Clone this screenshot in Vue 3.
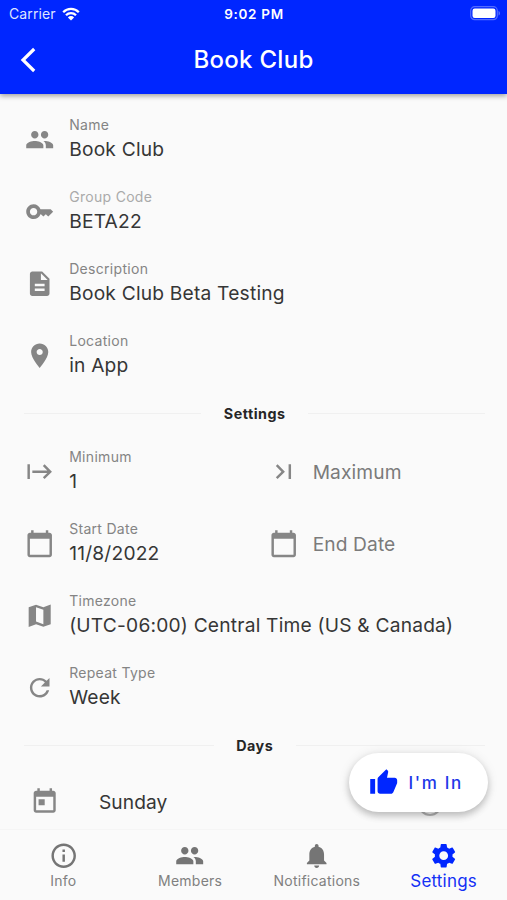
<script setup>
const icons = {
  people: 'M16 11c1.66 0 2.99-1.34 2.99-3S17.66 5 16 5s-3 1.34-3 3 1.34 3 3 3zm-8 0c1.66 0 2.99-1.34 2.99-3S9.66 5 8 5 5 6.34 5 8s1.34 3 3 3zm0 2c-2.33 0-7 1.17-7 3.5V19h14v-2.5c0-2.33-4.67-3.5-7-3.5zm8 0c-.29 0-.62.02-.97.05 1.16.84 1.97 1.97 1.97 3.45V19h6v-2.5c0-2.33-4.67-3.5-7-3.5z',
  key: 'M21 10h-8.35C11.83 7.67 9.61 6 7 6c-3.31 0-6 2.69-6 6s2.69 6 6 6c2.61 0 4.83-1.67 5.65-4H13l2 2 2-2 2 2 4-4.04L21 10zM7 15c-1.65 0-3-1.35-3-3s1.35-3 3-3 3 1.35 3 3-1.35 3-3 3z',
  doc: 'M14 2H6c-1.1 0-1.99.9-1.99 2L4 20c0 1.1.89 2 1.99 2H18c1.1 0 2-.9 2-2V8l-6-6zm2 16H8v-2h8v2zm0-4H8v-2h8v2zm-3-5V3.5L18.5 9H13z',
  place: 'M12 2C8.13 2 5 5.13 5 9c0 5.25 7 13 7 13s7-7.75 7-13c0-3.87-3.13-7-7-7zm0 9.5c-1.38 0-2.5-1.12-2.5-2.5s1.12-2.5 2.5-2.5 2.5 1.12 2.5 2.5-1.12 2.5-2.5 2.5z',
  start: 'M14.59 7.41L18.17 11H6v2h12.17l-3.59 3.59L16 18l6-6-6-6-1.41 1.41zM2 6v12h2V6H2z',
  last: 'M5.59 7.41L10.18 12l-4.59 4.59L7 18l6-6-6-6zM16 6h2v12h-2z',
  calendar: 'M20 3h-1V1h-2v2H7V1H5v2H4c-1.1 0-2 .9-2 2v16c0 1.1.9 2 2 2h16c1.1 0 2-.9 2-2V5c0-1.1-.9-2-2-2zm0 18H4V8h16v13z',
  map: 'M15 5.1L9 3 3 5.02v16.2l6-2.33 6 2.1 6-2.02V2.77L15 5.1zm0 13.79l-6-2.11V5.11l6 2.11v11.67z',
  refresh: 'M17.65 6.35C16.2 4.9 14.21 4 12 4c-4.42 0-7.99 3.58-7.99 8s3.57 8 7.99 8c3.73 0 6.84-2.55 7.73-6h-2.08c-.82 2.33-3.04 4-5.65 4-3.31 0-6-2.69-6-6s2.69-6 6-6c1.66 0 3.14.69 4.22 1.78L13 11h7V4l-2.35 2.35z',
  today: 'M19 3h-1V1h-2v2H8V1H6v2H5c-1.11 0-1.99.9-1.99 2L3 19c0 1.1.89 2 2 2h14c1.1 0 2-.9 2-2V5c0-1.1-.9-2-2-2zm0 16H5V8h14v11zM7 10h5v5H7v-5z',
  info: 'M11 7h2v2h-2zm0 4h2v6h-2zm1-9C6.48 2 2 6.48 2 12s4.48 10 10 10 10-4.48 10-10S17.52 2 12 2zm0 18c-4.41 0-8-3.59-8-8s3.59-8 8-8 8 3.59 8 8-3.59 8-8 8z',
  bell: 'M12 22c1.1 0 2-.9 2-2h-4c0 1.1.89 2 2 2zm6-6v-5c0-3.07-1.64-5.64-4.5-6.32V4c0-.83-.67-1.5-1.5-1.5s-1.5.67-1.5 1.5v.68C7.63 5.36 6 7.92 6 11v5l-2 2v1h16v-1l-2-2z',
  gear: 'M19.14 12.94c.04-.3.06-.61.06-.94 0-.32-.02-.64-.07-.94l2.03-1.58c.18-.14.23-.41.12-.61l-1.92-3.32c-.12-.22-.37-.29-.59-.22l-2.39.96c-.5-.38-1.03-.7-1.62-.94l-.36-2.54c-.04-.24-.24-.41-.48-.41h-3.84c-.24 0-.43.17-.47.41l-.36 2.54c-.59.24-1.13.57-1.62.94l-2.39-.96c-.22-.08-.47 0-.59.22L2.74 8.87c-.12.21-.08.47.12.61l2.03 1.58c-.05.3-.09.63-.09.94s.02.64.07.94l-2.03 1.58c-.18.14-.23.41-.12.61l1.92 3.32c.12.22.37.29.59.22l2.39-.96c.5.38 1.03.7 1.62.94l.36 2.54c.05.24.24.41.48.41h3.84c.24 0 .44-.17.47-.41l.36-2.54c.59-.24 1.13-.56 1.62-.94l2.39.96c.22.08.47 0 .59-.22l1.92-3.32c.12-.22.07-.47-.12-.61l-2.01-1.58zM12 15.6c-1.98 0-3.6-1.62-3.6-3.6s1.62-3.6 3.6-3.6 3.6 1.62 3.6 3.6-1.62 3.6-3.6 3.6z',
  thumb: 'M1 21h4V9H1v12zm22-11c0-1.1-.9-2-2-2h-6.31l.95-4.57.03-.32c0-.41-.17-.79-.44-1.06L14.17 1 7.59 7.59C7.22 7.95 7 8.45 7 9v10c0 1.1.9 2 2 2h9c.83 0 1.54-.5 1.84-1.22l3.02-7.05c.09-.23.14-.47.14-.73v-2z',
}

const details = [
  [{ icon: 'people', label: 'Name', value: 'Book Club' }],
  [{ icon: 'key', label: 'Group Code', value: 'BETA22', disabled: true }],
  [{ icon: 'doc', label: 'Description', value: 'Book Club Beta Testing' }],
  [{ icon: 'place', label: 'Location', value: 'in App' }],
]
const settings = [
  [{ icon: 'start', label: 'Minimum', value: '1' }, { icon: 'last', placeholder: 'Maximum' }],
  [{ icon: 'calendar', label: 'Start Date', value: '11/8/2022' }, { icon: 'calendar', placeholder: 'End Date' }],
  [{ icon: 'map', label: 'Timezone', value: '(UTC-06:00) Central Time (US & Canada)' }],
  [{ icon: 'refresh', label: 'Repeat Type', value: 'Week' }],
]
const sections = [
  { rows: details },
  { title: 'Settings', rows: settings },
  { title: 'Days', rows: [] },
]
const tabs = [
  { icon: 'info', label: 'Info' },
  { icon: 'people', label: 'Members' },
  { icon: 'bell', label: 'Notifications' },
  { icon: 'gear', label: 'Settings', active: true },
]
</script>

<template>
  <div class="screen">
    <header class="top">
      <div class="status">
        <div class="carrier">
          <span>Carrier</span>
          <svg class="wifi" viewBox="0 0 18 14">
            <path d="M1.2 5.2a11 11 0 0 1 15.6 0M4 8.2a7 7 0 0 1 10 0" fill="none" stroke="#fff" stroke-width="2.3" />
            <path d="M9 13.6L5.9 10.4a4.4 4.4 0 0 1 6.2 0z" fill="#fff" />
          </svg>
        </div>
        <span class="time">9:02 PM</span>
        <div class="power">
          <svg class="battery" viewBox="0 0 31 15">
            <rect x=".7" y=".7" width="26.6" height="13" rx="4" fill="none" stroke="#fff" stroke-opacity=".32" stroke-width="1.2" />
            <rect x="2.5" y="2.5" width="23" height="9.4" rx="2.2" fill="#fff" />
            <path d="M28.6 5v4.6c1.7-.7 1.7-3.9 0-4.6z" fill="#fff" fill-opacity=".4" />
          </svg>
        </div>
      </div>
      <div class="bar">
        <svg class="back" viewBox="0 0 16 26"><path d="M14.2 2L3 13l11.2 11" fill="none" stroke="#fff" stroke-width="3.2" /></svg>
        <h1>Book Club</h1>
        <span></span>
      </div>
    </header>

    <main class="content">
      <section v-for="(section, i) in sections" :key="i">
        <div v-if="section.title" class="divider"><i></i><b>{{ section.title }}</b><i></i></div>
        <div v-for="(row, r) in section.rows" :key="r" class="row" :class="{ pair: row.length > 1 }">
          <div v-for="field in row" :key="field.label || field.placeholder" class="field">
            <svg class="icon" viewBox="0 0 24 24"><path :d="icons[field.icon]" /></svg>
            <div v-if="field.label" class="text">
              <span class="label" :class="{ disabled: field.disabled }">{{ field.label }}</span>
              <span class="value">{{ field.value }}</span>
            </div>
            <span v-else class="placeholder">{{ field.placeholder }}</span>
          </div>
        </div>
      </section>
      <div class="day">
        <svg class="icon" viewBox="0 0 24 24"><path :d="icons.today" /></svg>
        <span>Sunday</span>
        <i class="check"></i>
      </div>
    </main>

    <button class="fab">
      <svg class="icon" viewBox="0 0 24 24"><path :d="icons.thumb" /></svg>
      <span>I'm In</span>
    </button>

    <nav class="tabs">
      <div v-for="tab in tabs" :key="tab.label" class="tab" :class="{ active: tab.active }">
        <svg class="icon" viewBox="0 0 24 24"><path :d="icons[tab.icon]" /></svg>
        <span>{{ tab.label }}</span>
      </div>
    </nav>
  </div>
</template>

<style>
body { margin: 0; }
</style>

<style scoped>
* { box-sizing: border-box; }
.screen {
  position: relative;
  display: flex;
  flex-direction: column;
  width: 507px;
  height: 900px;
  overflow: hidden;
  background: #fafafa;
  color: #363636;
  font-family: Inter, "Liberation Sans", sans-serif;
  white-space: nowrap;
}
.top {
  flex: none;
  z-index: 1;
  height: 94px;
  background: #0026ff;
  color: #fff;
  box-shadow: 0 2px 5px rgba(0, 0, 0, .36);
}
.status {
  display: grid;
  grid-template-columns: 1fr auto 1fr;
  align-items: center;
  height: 27px;
  padding: 0 8px 0 9px;
  font-size: 14px;
}
.carrier { display: flex; align-items: center; gap: 6px; color: #dfe4ff; letter-spacing: .1px; }
.wifi { width: 18px; height: 14px; }
.time { font-weight: 600; font-size: 13.5px; letter-spacing: .7px; }
.power { display: flex; justify-content: flex-end; }
.battery { width: 31px; height: 15px; margin-right: -2px; }
.bar {
  display: grid;
  grid-template-columns: 1fr auto 1fr;
  align-items: center;
  height: 66px;
  padding: 0 20px;
}
.back { width: 16px; height: 26px; }
h1 { margin: 0; font-size: 24px; line-height: 30px; font-weight: 500; letter-spacing: .3px; }
.content { flex: 1; min-height: 0; overflow: hidden; padding: 10px 20px 0 25.4px; }
.row { display: grid; height: 72px; }
.row.pair { grid-template-columns: 243.5px 1fr; }
.field { display: flex; align-items: center; gap: 14.4px; }
.icon { flex: none; width: 29.4px; height: 29.4px; fill: #868686; }
.text { display: flex; flex-direction: column; padding-bottom: 2px; }
.label { font-size: 14px; line-height: 20px; letter-spacing: .3px; color: #848484; }
.label.disabled { color: #aaa; }
.value { font-size: 19.2px; line-height: 28px; letter-spacing: .2px; }
.placeholder { font-size: 19.2px; letter-spacing: .1px; color: #7b7b7b; }
.divider { display: flex; align-items: center; gap: 22.5px; height: 44px; margin: 0 2px 0 -1px; padding-bottom: 1px; }
.divider i { flex: 1; height: 1px; background: #f0f0f0; }
.divider b { font-size: 14.3px; font-weight: 700; letter-spacing: .5px; color: #262626; }
.day {
  display: grid;
  grid-template-columns: 69px 1fr auto;
  align-items: center;
  height: 68px;
  padding: 0 45px 0 4.6px;
  font-size: 19.2px;
  letter-spacing: .05px;
}
.check { width: 24.5px; height: 24.5px; margin-top: 3px; border: 2px solid #b4b4b4; border-radius: 50%; }
.fab {
  position: absolute;
  z-index: 2;
  left: 349px;
  top: 753px;
  display: flex;
  align-items: center;
  gap: 10px;
  width: 139px;
  height: 59px;
  padding: 0 0 0 20px;
  border: 0;
  border-radius: 30px;
  background: #fff;
  color: #2037e8;
  font: 500 17px Inter, "Liberation Sans", sans-serif;
  letter-spacing: 1.7px;
  box-shadow: 0 4px 7px rgba(0, 0, 0, .2), 0 1px 12px rgba(0, 0, 0, .1);
}
.fab .icon { fill: #0026ff; }
.tabs {
  flex: none;
  display: grid;
  grid-template-columns: repeat(4, 1fr);
  height: 71px;
  border-top: 1px solid #f5f5f5;
  background: #fafafa;
}
.tab { display: flex; flex-direction: column; align-items: center; padding-top: 11px; color: #808080; font-size: 14px; line-height: 22px; letter-spacing: .25px; }
.tab .icon { fill: #757575; }
.tab.active { color: #1230f5; font-size: 17px; line-height: 22px; letter-spacing: .2px; }
.tab.active .icon { fill: #0026ff; }
</style>
